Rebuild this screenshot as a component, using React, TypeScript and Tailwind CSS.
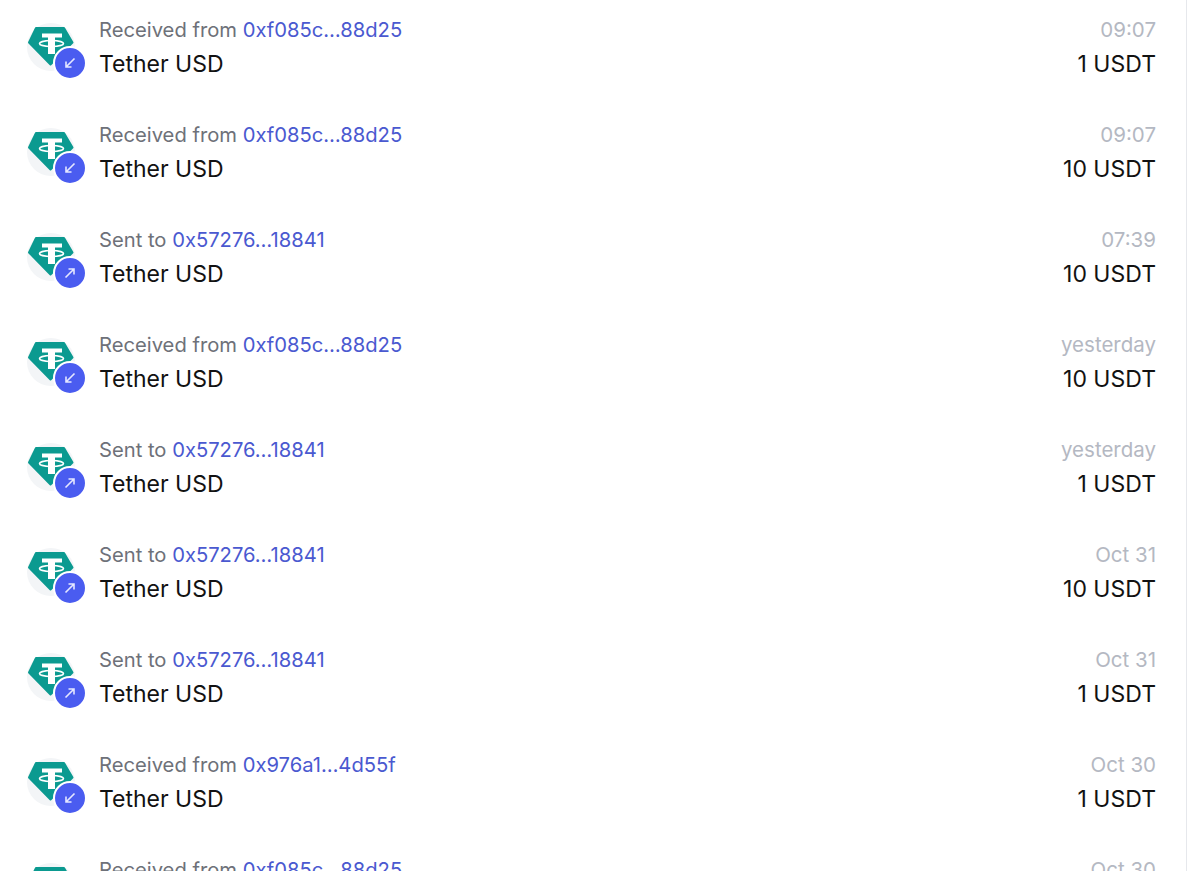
import React from 'react';

type Tx = {
  kind: 'in' | 'out';
  address: string;
  time: string;
  amount: string;
};

const TXS: Tx[] = [
  { kind: 'in', address: '0xf085c…88d25', time: '09:07', amount: '1 USDT' },
  { kind: 'in', address: '0xf085c…88d25', time: '09:07', amount: '10 USDT' },
  { kind: 'out', address: '0x57276…18841', time: '07:39', amount: '10 USDT' },
  { kind: 'in', address: '0xf085c…88d25', time: 'yesterday', amount: '10 USDT' },
  { kind: 'out', address: '0x57276…18841', time: 'yesterday', amount: '1 USDT' },
  { kind: 'out', address: '0x57276…18841', time: 'Oct 31', amount: '10 USDT' },
  { kind: 'out', address: '0x57276…18841', time: 'Oct 31', amount: '1 USDT' },
  { kind: 'in', address: '0x976a1…4d55f', time: 'Oct 30', amount: '1 USDT' },
  { kind: 'in', address: '0xf085c…88d25', time: 'Oct 30', amount: '1 USDT' },
];

const TetherIcon = () => (
  <svg viewBox="0 0 48 48" className="w-12 h-12">
    <circle cx="24" cy="24" r="24" fill="#f3f5f7" />
    <path
      d="M9 5h28l8.500 14.500-22 22L2 19.500z"
      fill="#0b9a90"
      stroke="#0b9a90"
      strokeWidth="2"
      strokeLinejoin="round"
    />
    <path d="M15 10.500h20v4h-7V31h-7V14.500h-6z" fill="#fff" />
    <ellipse cx="24.500" cy="20.500" rx="12" ry="3" fill="none" stroke="#fff" strokeWidth="1.600" />
  </svg>
);

const DirectionBadge = ({ kind }: { kind: Tx['kind'] }) => (
  <div className="absolute left-[26px] top-[23px] w-[34px] h-[34px] rounded-full bg-[#4a5cf0] border-2 border-white flex items-center justify-center">
    <svg viewBox="0 0 16 16" className="w-4 h-4" fill="none" stroke="#e4e7ff" strokeWidth="1.600">
      {kind === 'in' ? (
        <path d="M12.500 3.500 4 12M4 6.500V12h5.500" />
      ) : (
        <path d="M3.500 12.500 12 4M6.500 4H12v5.500" />
      )}
    </svg>
  </div>
);

const TxRow = ({ tx }: { tx: Tx }) => (
  <div className="h-[105px] shrink-0 flex pl-[27px] pr-[30px] pt-[16px]">
    <div className="relative w-[60px] h-[60px] mt-[7px] shrink-0">
      <TetherIcon />
      <DirectionBadge kind={tx.kind} />
    </div>
    <div className="ml-[12px] flex-1">
      <div className="text-[20.2px] leading-[28px] text-[#6e7179]">
        {tx.kind === 'in' ? 'Received from' : 'Sent to'}{' '}
        <span className="text-[#4a59d0]">{tx.address}</span>
      </div>
      <div className="mt-[5px] text-[23px] leading-[30px] text-[#121212]">Tether USD</div>
    </div>
    <div className="text-right">
      <div className="text-[20.5px] leading-[28px] text-[#b4b8c2]">{tx.time}</div>
      <div className="mt-[5px] text-[23px] leading-[30px] text-[#121212]">{tx.amount}</div>
    </div>
  </div>
);

export default function App() {
  return (
    <div className="h-[871px] overflow-hidden bg-white border-r border-[#e6e8ec] flex flex-col font-['Inter',sans-serif]">
      {TXS.map((tx, i) => (
        <TxRow key={i} tx={tx} />
      ))}
    </div>
  );
}
